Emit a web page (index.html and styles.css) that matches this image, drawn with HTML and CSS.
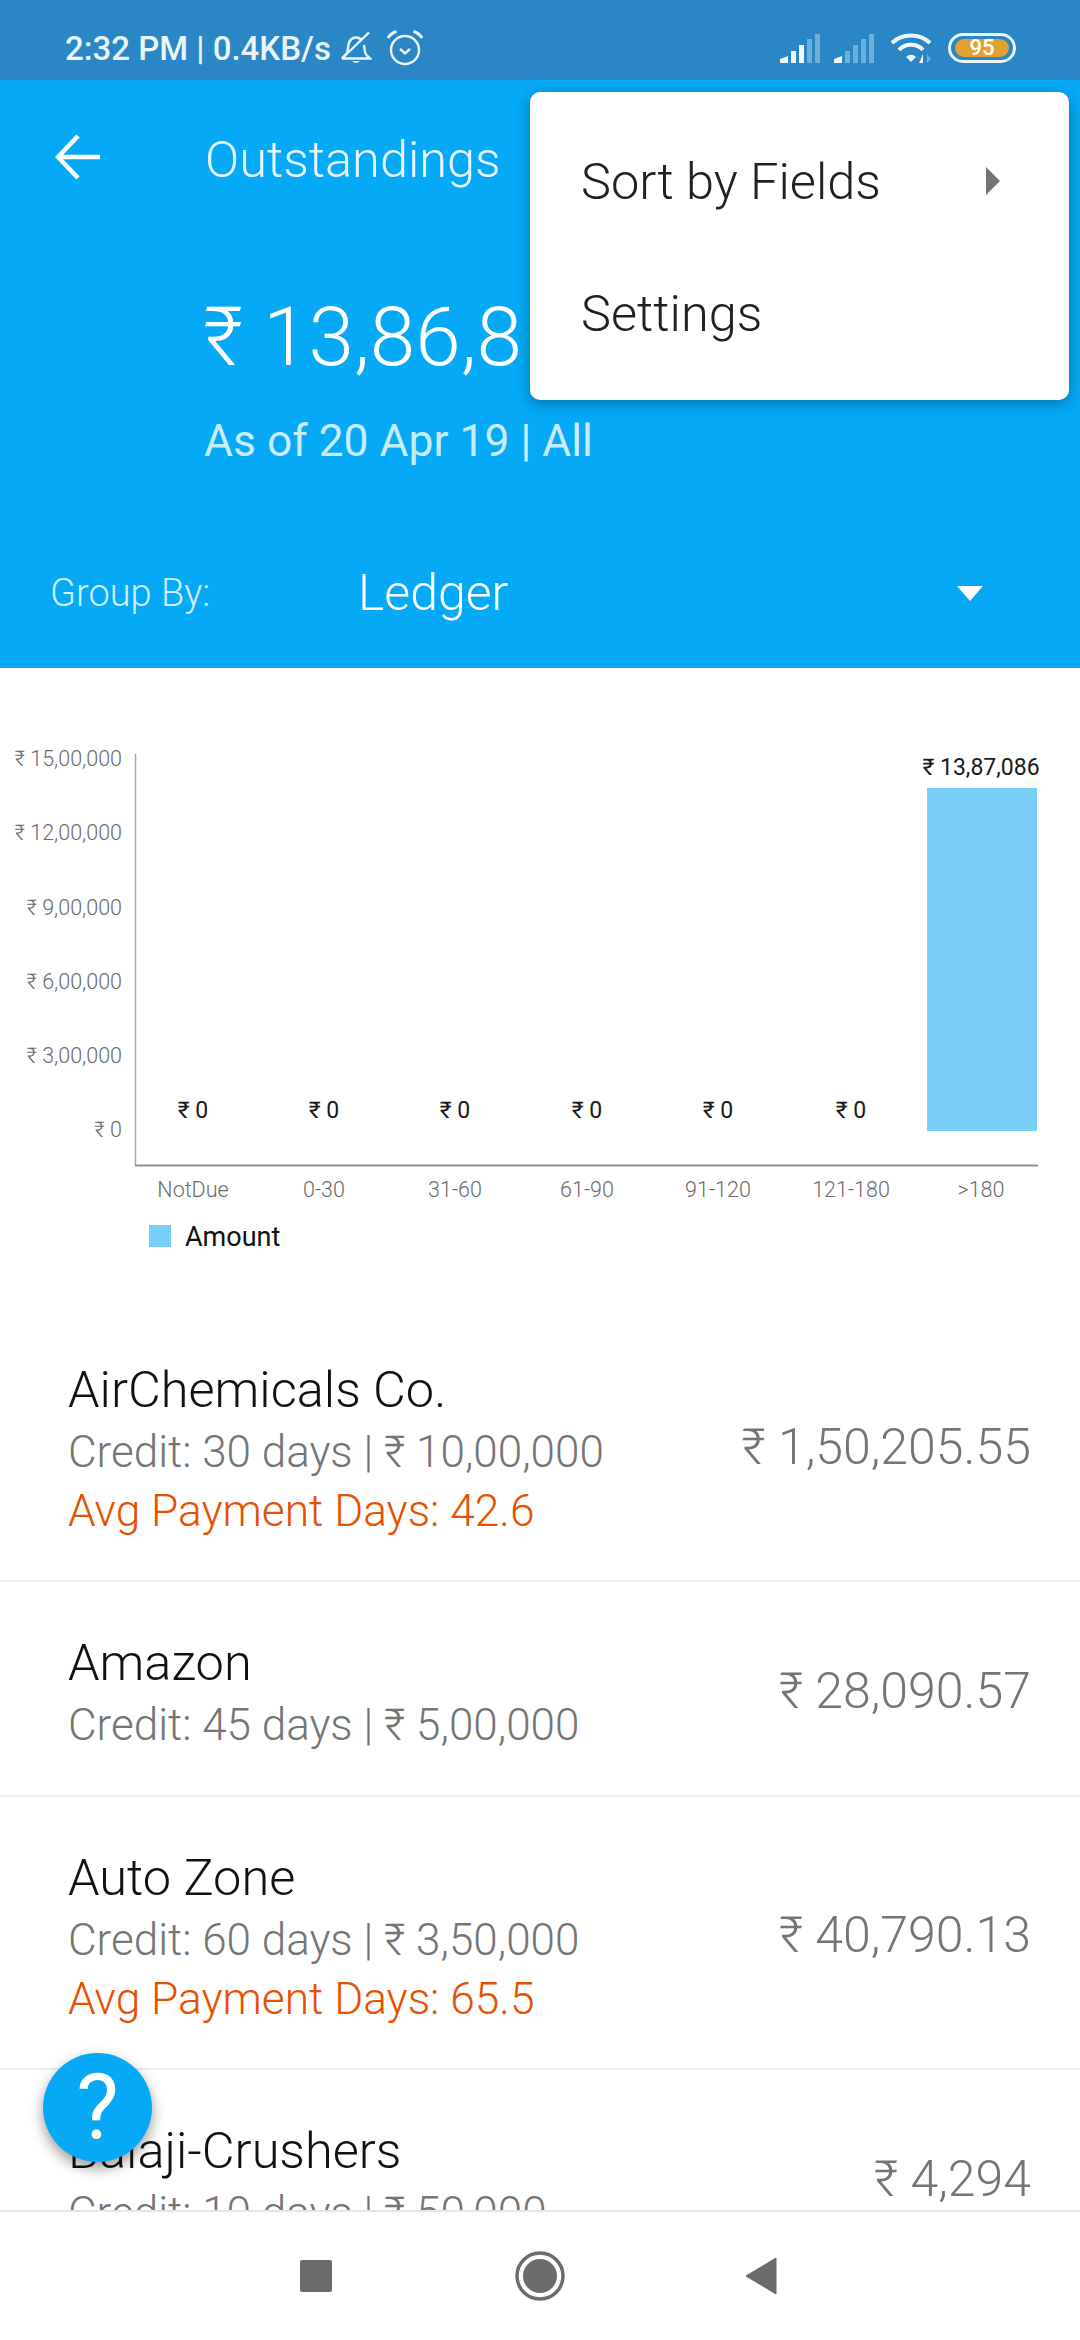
FILE: index.html
```html
<!DOCTYPE html>
<html lang="en">
<head>
  <meta charset="UTF-8" />
  <title>Outstandings</title>
  <link rel="stylesheet" href="styles.css">
</head>
<body>
  <div class="screen">

    <!-- Status bar -->
    <div class="status-bar">
      <div class="status-left">
        <span class="status-text">2:32 PM | 0.4KB/s</span>
        <svg class="bell-icon" width="32" height="34" viewBox="0 0 32 34" fill="none" stroke="#e9f5fc" stroke-width="2.4">
          <path d="M2 27.5 L7 22 C8 19 8 16 8.5 13.5 C9.5 9 12.5 6.5 16 6.5 C18.5 6.5 20.5 7.5 22 9.5 M24 14 C24.5 18 24.5 21 26 23.5 L30 27.5 L2 27.5" />
          <path d="M2 27.5 L29 1.5" />
          <path d="M12 30 Q16 34 20 30 Z" fill="#e9f5fc" stroke="none" />
        </svg>
        <svg class="alarm-icon" width="36" height="36" viewBox="0 0 36 36" fill="none" stroke="#e9f5fc" stroke-width="2.4">
          <circle cx="18" cy="20" r="14" />
          <path d="M1 8 Q4 3 9.500 1.500 M35 8 Q32 3 26.500 1.500" stroke-width="3" />
          <path d="M13 19 L18 23.500 L23 19" />
        </svg>
      </div>
      <div class="status-right">
        <svg class="signal-icon" width="40" height="29" viewBox="0 0 40 29">
          <path d="M0 29 V25 L8 22 V29 Z" fill="#eef7fd" />
          <rect x="11" y="17" width="5" height="12" fill="#eef7fd" />
          <rect x="19" y="11" width="5" height="18" fill="#eef7fd" />
          <rect x="27" y="5" width="5" height="24" fill="#6eaedb" />
          <rect x="35" y="0" width="5" height="29" fill="#6eaedb" />
        </svg>
        <svg class="signal-icon" width="40" height="29" viewBox="0 0 40 29">
          <path d="M0 29 V25 L8 22 V29 Z" fill="#eef7fd" />
          <rect x="11" y="17" width="5" height="12" fill="#6eaedb" />
          <rect x="19" y="11" width="5" height="18" fill="#6eaedb" />
          <rect x="27" y="5" width="5" height="24" fill="#6eaedb" />
          <rect x="35" y="0" width="5" height="29" fill="#6eaedb" />
        </svg>
        <svg class="wifi-icon" width="44" height="32" viewBox="0 0 44 32" fill="none" stroke="#eef7fd" stroke-width="4">
          <path d="M2 11 C12 1 30 1 40 11" />
          <path d="M9 18 C15 11 27 11 33 18" />
          <path d="M16 25 L21 30 L26 25 C23 22 19 22 16 25 Z" fill="#eef7fd" stroke="none" />
          <path d="M33 22 V31 L29 31 Z" fill="#eef7fd" stroke="none" />
          <path d="M37 31 V22 L41 27 Z" fill="#6eaedb" stroke="none" />
        </svg>
        <div class="battery"><span class="battery-level">95</span></div>
      </div>
    </div>

    <!-- Blue header with the open menu on top -->
    <div class="app-header">
      <div class="title-row">
        <svg class="back-icon" width="46" height="46" viewBox="0 0 46 46" fill="none" stroke="#fff" stroke-width="4.500">
          <path d="M45 23 H4" />
          <path d="M23 2 L3 23 L23 44" />
        </svg>
        <div class="title">Outstandings</div>
      </div>
      <div class="total-amount">₹ 13,86,8</div>
      <div class="as-of">As of 20 Apr 19 | All</div>
      <div class="group-row">
        <div class="group-label">Group By:</div>
        <div class="group-value">Ledger</div>
        <div class="caret-down"></div>
      </div>

      <div class="popup-menu">
        <div class="menu-item">Sort by Fields <span class="caret-right"></span></div>
        <div class="menu-item">Settings</div>
      </div>
    </div>

    <!-- Ageing chart -->
    <div class="chart-section">
      <svg class="chart" width="1080" height="557" viewBox="0 668 1080 557">
        <line x1="135.500" y1="754" x2="135.500" y2="1166" stroke="#a8a8a8" stroke-width="1.500" />
        <line x1="135" y1="1165.500" x2="1038" y2="1165.500" stroke="#8f8f8f" stroke-width="2" />
        <rect x="927" y="788" width="110" height="343" fill="#79cffa" />

        <g class="y-ticks">
          <text x="122" y="766">₹ 15,00,000</text>
          <text x="122" y="840">₹ 12,00,000</text>
          <text x="122" y="915">₹ 9,00,000</text>
          <text x="122" y="989">₹ 6,00,000</text>
          <text x="122" y="1063">₹ 3,00,000</text>
          <text x="122" y="1137">₹ 0</text>
        </g>
        <g class="bar-values">
          <text x="193" y="1118">₹ 0</text>
          <text x="324" y="1118">₹ 0</text>
          <text x="455" y="1118">₹ 0</text>
          <text x="587" y="1118">₹ 0</text>
          <text x="718" y="1118">₹ 0</text>
          <text x="851" y="1118">₹ 0</text>
          <text x="981" y="775">₹ 13,87,086</text>
        </g>
        <g class="x-ticks">
          <text x="193" y="1197">NotDue</text>
          <text x="324" y="1197">0-30</text>
          <text x="455" y="1197">31-60</text>
          <text x="587" y="1197">61-90</text>
          <text x="718" y="1197">91-120</text>
          <text x="851" y="1197">121-180</text>
          <text x="981" y="1197">&gt;180</text>
        </g>
      </svg>
      <div class="legend">
        <span class="legend-box"></span>
        <span class="legend-text">Amount</span>
      </div>
    </div>

    <!-- Ledger list -->
    <div class="ledger-list">
      <div class="ledger-row">
        <div class="ledger-info">
          <div class="ledger-name">AirChemicals Co.</div>
          <div class="ledger-credit">Credit: 30 days | ₹ 10,00,000</div>
          <div class="ledger-avg">Avg Payment Days: 42.6</div>
        </div>
        <div class="ledger-amount">₹ 1,50,205.55</div>
      </div>
      <div class="ledger-row">
        <div class="ledger-info">
          <div class="ledger-name">Amazon</div>
          <div class="ledger-credit">Credit: 45 days | ₹ 5,00,000</div>
        </div>
        <div class="ledger-amount">₹ 28,090.57</div>
      </div>
      <div class="ledger-row">
        <div class="ledger-info">
          <div class="ledger-name">Auto Zone</div>
          <div class="ledger-credit">Credit: 60 days | ₹ 3,50,000</div>
          <div class="ledger-avg">Avg Payment Days: 65.5</div>
        </div>
        <div class="ledger-amount">₹ 40,790.13</div>
      </div>
      <div class="ledger-row">
        <div class="ledger-info">
          <div class="ledger-name">Balaji-Crushers</div>
          <div class="ledger-credit">Credit: 10 days | ₹ 50,000</div>
        </div>
        <div class="ledger-amount">₹ 4,294</div>
      </div>
    </div>

    <!-- Help button -->
    <div class="help-button">?</div>

    <!-- Navigation bar -->
    <div class="nav-bar">
      <svg width="32" height="32" viewBox="0 0 32 32"><rect width="32" height="32" rx="2" fill="#6b6b6b" /></svg>
      <svg width="50" height="50" viewBox="0 0 50 50">
        <circle cx="25" cy="25" r="23" fill="none" stroke="#6b6b6b" stroke-width="3.500" />
        <circle cx="25" cy="25" r="17" fill="#6b6b6b" />
      </svg>
      <svg class="nav-back" width="32" height="38" viewBox="0 0 32 38"><path d="M31 1 V37 L1 19 Z" fill="#6b6b6b" stroke="#6b6b6b" stroke-linejoin="round" /></svg>
    </div>
  </div>
</body>
</html>
```

FILE: styles.css
```css
* {
  box-sizing: border-box;
}

body {
  margin: 0;
  background: #fff;
  font-family: Roboto, "Noto Sans", sans-serif;
  font-weight: 300;
}

.screen {
  position: relative;
  width: 1080px;
  height: 2340px;
  display: flex;
  flex-direction: column;
  overflow: hidden;
}

/* Status bar */
.status-bar {
  height: 80px;
  flex-shrink: 0;
  background: #2a86c4;
  display: flex;
  align-items: center;
  justify-content: space-between;
  padding: 16px 64px 0 65px;
}

.status-left,
.status-right {
  display: flex;
  align-items: center;
}

.status-text {
  font-size: 33px;
  font-weight: 500;
  color: #e9f5fc;
  white-space: nowrap;
}

.bell-icon {
  margin-left: 9px;
}

.alarm-icon {
  margin-left: 15px;
}

.signal-icon {
  margin-right: 14px;
}

.wifi-icon {
  margin-left: 2px;
  margin-right: 14px;
}

.battery {
  width: 68px;
  height: 30px;
  border: 3px solid #e9f5fc;
  border-radius: 15px;
  padding: 3px 4px;
}

.battery-level {
  display: block;
  height: 18px;
  background: #e2a233;
  border-radius: 9px;
  color: #fff;
  font-size: 22px;
  font-weight: 500;
  line-height: 18px;
  text-align: center;
}

/* Header */
.app-header {
  position: relative;
  height: 588px;
  flex-shrink: 0;
  background: #05a9f5;
  color: #fff;
  padding-top: 46px;
}

.title-row {
  display: flex;
  align-items: center;
  padding-left: 55px;
}

.title {
  margin-top: 6px;
  margin-left: 104px;
  font-size: 50.5px;
  line-height: 56px;
  color: #e4f5fe;
}

.total-amount {
  margin-top: 101px;
  padding-left: 203px;
  font-size: 82px;
  line-height: 96px;
}

.as-of {
  margin-top: 31px;
  padding-left: 204px;
  font-size: 44.4px;
  font-weight: 400;
  line-height: 50px;
  color: #c9ecfd;
}

.group-row {
  display: flex;
  align-items: center;
  margin-top: 99px;
  padding-left: 50px;
}

.group-label {
  width: 308px;
  font-size: 38px;
  line-height: 56px;
  color: #d0effd;
}

.group-value {
  font-size: 50px;
  line-height: 56px;
}

.caret-down {
  margin-left: 449px;
  border-left: 13px solid transparent;
  border-right: 13px solid transparent;
  border-top: 15px solid #fff;
}

/* Open overflow menu */
.popup-menu {
  position: absolute;
  top: 12px;
  right: 11px;
  width: 539px;
  height: 308px;
  padding: 24px 0 20px;
  background: #fff;
  border-radius: 10px;
  box-shadow: 0 4px 14px rgba(0, 0, 0, 0.3);
}

.menu-item {
  position: relative;
  height: 132px;
  padding-left: 51px;
  font-size: 50.5px;
  line-height: 132px;
  color: #212121;
}

.caret-right {
  position: absolute;
  top: 51px;
  left: 456px;
  border-top: 14px solid transparent;
  border-bottom: 14px solid transparent;
  border-left: 14px solid #757575;
}

/* Chart */
.chart-section {
  height: 641px;
  flex-shrink: 0;
}

.chart {
  display: block;
}

.chart text {
  font-family: Roboto, "Noto Sans", sans-serif;
}

.y-ticks text {
  font-size: 21.5px;
  text-anchor: end;
  fill: #6a6a6a;
}

.bar-values text {
  font-size: 23px;
  font-weight: 400;
  text-anchor: middle;
  fill: #1a1a1a;
}

.x-ticks text {
  font-size: 21.5px;
  text-anchor: middle;
  fill: #6a6a6a;
}

.legend {
  display: flex;
  align-items: center;
  padding-left: 149px;
  height: 22px;
}

.legend-box {
  width: 22px;
  height: 22px;
  background: #79cffa;
}

.legend-text {
  margin-left: 14px;
  padding-top: 2px;
  font-size: 27px;
  font-weight: 400;
  color: #111;
}

/* Ledger list */
.ledger-list {
  flex: 1;
  min-height: 0;
  overflow: hidden;
}

.ledger-row {
  display: flex;
  align-items: center;
  justify-content: space-between;
  padding: 49px 49px 40px 68px;
  border-bottom: 2px solid #eeeeee;
}

.ledger-name {
  margin-bottom: 1px;
  font-size: 50.5px;
  line-height: 63px;
  color: #111;
}

.ledger-credit {
  font-size: 44px;
  line-height: 60px;
  color: #757575;
}

.ledger-avg {
  font-size: 44.3px;
  line-height: 58px;
  color: #e65100;
}

.ledger-amount {
  padding-bottom: 5px;
  font-size: 50px;
  color: #757575;
  white-space: nowrap;
}

/* Floating help button */
.help-button {
  position: absolute;
  left: 43px;
  top: 2053px;
  width: 109px;
  height: 109px;
  border-radius: 50%;
  background: #05a9f5;
  box-shadow: 0 6px 14px rgba(0, 0, 0, 0.4);
  color: #fff;
  font-size: 90px;
  font-weight: 400;
  line-height: 109px;
  text-align: center;
}

/* Navigation bar */
.nav-bar {
  height: 130px;
  flex-shrink: 0;
  background: #fff;
  border-top: 2px solid #e6e6e6;
  display: flex;
  align-items: center;
  gap: 183px;
  padding-left: 300px;
}

.nav-back {
  margin-left: -3px;
}
```
